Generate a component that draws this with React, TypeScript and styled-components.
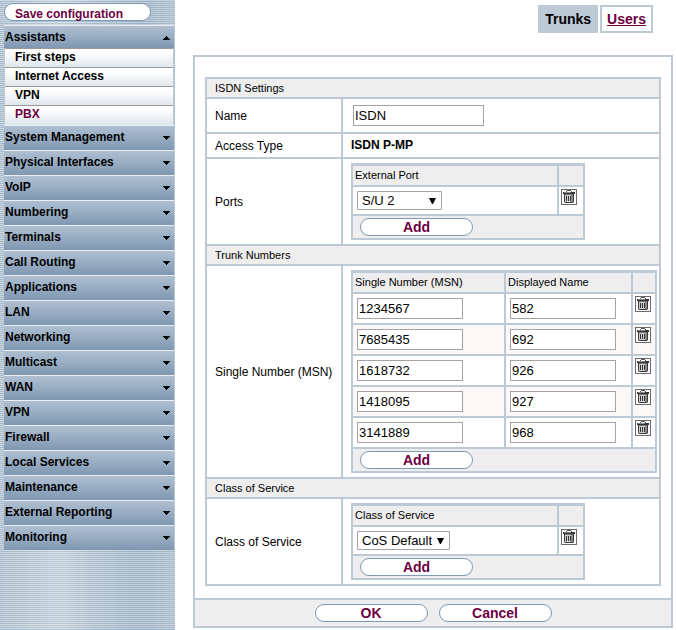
import React from "react";
import styled, { createGlobalStyle } from "styled-components";

const line = "#bec9d6";
const shade = "#eeeeee";
const accent = "#6d0042";

const GlobalStyle = createGlobalStyle`
  *, *::before, *::after { box-sizing: border-box; }
  body {
    margin: 0;
    background: #fff;
    color: #000;
    font: 13px/16px "Liberation Sans", Arial, sans-serif;
  }
  button, input, select { font-family: inherit; color: inherit; }
`;

const Page = styled.div`
  display: flex;
  min-height: 100vh;
`;

const Sidebar = styled.nav`
  flex: 0 0 175px;
  padding: 3px 1px 0 4px;
  background:
    repeating-linear-gradient(180deg, rgba(255, 255, 255, 0.3) 0 1px, rgba(110, 150, 180, 0.2) 1px 2px),
    linear-gradient(90deg, #b4c4d2 0, #cbd7df 60px, #bac8d6 90px, #aabccd 125px, #a8bacb 150px, #b3c3d1 175px);
`;

const PillButton = styled.button`
  width: 113px;
  height: 18px;
  padding: 0;
  border: 1px solid #7d99b3;
  border-radius: 9px;
  background: #fff;
  color: ${accent};
  font-size: 14px;
  font-weight: bold;
  line-height: 16px;
  cursor: pointer;
`;

const SaveButton = styled(PillButton)`
  display: block;
  width: 147px;
  margin-bottom: 4px;
  padding: 2px 0 0 10px;
  font-size: 12px;
  text-align: left;
`;

const MenuHeader = styled.button<{ $open: boolean }>`
  display: flex;
  align-items: center;
  justify-content: space-between;
  width: 100%;
  height: ${(p) => (p.$open ? 23 : 25)}px;
  padding: 0 4px ${(p) => (p.$open ? 0 : 2)}px 1px;
  border: 0;
  border-top: 1px solid #e9eef4;
  background: linear-gradient(#afbfd1, #93a8bf 60%, #7f97b1);
  font-size: 12px;
  font-weight: bold;
  text-align: left;
  cursor: pointer;
`;

const Arrow = styled.svg`
  width: 7px;
  height: 4px;
  margin-top: 2px;
`;

const SubMenu = styled.ul`
  height: 77px;
  margin: 0 1px;
  padding: 0;
  background: #dfe7ee;
  list-style: none;
`;

const SubItem = styled.li`
  height: 19px;
  border-top: 1px solid #999;
  background: linear-gradient(#fff 20%, #dfe7ee);
`;

const SubLink = styled.a<{ $active: boolean }>`
  display: block;
  padding-left: 10px;
  color: ${(p) => (p.$active ? accent : "#000")};
  font-size: 12px;
  font-weight: bold;
  line-height: 17px;
  text-decoration: none;
`;

const Content = styled.main`
  flex: 1;
  min-width: 0;
  padding: 5px 3px 2px 18px;
`;

const Tabs = styled.nav`
  display: flex;
  justify-content: flex-end;
  gap: 2px;
  margin: 0 20px 22px 0;
`;

const Tab = styled.a<{ $active: boolean }>`
  padding: 4px 5px;
  border: 2px solid ${line};
  background: ${(p) => (p.$active ? line : "#fff")};
  color: ${(p) => (p.$active ? "#000" : accent)};
  font-size: 14px;
  font-weight: bold;
  line-height: 16px;
  text-decoration: ${(p) => (p.$active ? "none" : "underline")};
`;

const Panel = styled.form`
  border: 2px solid ${line};
`;

const Settings = styled.div`
  display: grid;
  gap: 2px;
  margin: 20px 10px 12px;
  padding: 2px;
  background: ${line};
`;

const SectionTitle = styled.h2`
  margin: 0;
  padding: 0 8px;
  background: ${shade};
  font-size: 11px;
  font-weight: normal;
  line-height: 18px;
`;

const Row = styled.div`
  display: grid;
  grid-template-columns: 134px 1fr;
  gap: 2px;
`;

const Label = styled.label`
  display: flex;
  align-items: center;
  padding-left: 8px;
  background: #fff;
  font-size: 12px;
  white-space: nowrap;
`;

const Value = styled.div`
  padding: 4px 2px 4px 8px;
  background: #fff;
`;

const NameValue = styled(Value)`
  padding: 6px 2px 6px 10px;
`;

const Fixed = styled.output`
  display: block;
  font-size: 12px;
  font-weight: bold;
  line-height: 15px;
`;

const TextInput = styled.input<{ $wide?: boolean }>`
  display: block;
  width: ${(p) => (p.$wide ? 131 : 106)}px;
  height: 21px;
  padding: 1px;
  border: 1px solid #a3a3a3;
  background: #fff;
  font-size: 13px;
`;

const SelectBox = styled.span<{ $width: number }>`
  display: grid;
  align-items: center;
  width: ${(p) => p.$width}px;
  height: 19px;
  border: 1px solid #a3a3a3;
  border-radius: 1px;
  background: #fff;
`;

const Select = styled.select`
  grid-area: 1 / 1;
  width: 100%;
  height: 17px;
  padding: 0 0 0 4px;
  border: 0;
  background: transparent;
  font-size: 13px;
  appearance: none;
`;

const SelectArrow = styled.svg`
  grid-area: 1 / 1;
  justify-self: end;
  width: 7px;
  height: 6px;
  margin-right: 5px;
  pointer-events: none;
`;

const List = styled.table<{ $width: number }>`
  width: ${(p) => p.$width}px;
  max-width: 100%;
  table-layout: fixed;
  border-collapse: separate;
  border-spacing: 2px;
  border-top: 1px solid ${line};
  background: ${line};
`;

const HeadCell = styled.th<{ $width?: number }>`
  width: ${(p) => (p.$width ? `${p.$width}px` : "auto")};
  height: 19px;
  padding: 0 2px;
  background: ${shade};
  font-size: 11px;
  font-weight: normal;
  line-height: 18px;
  text-align: left;
  vertical-align: top;
`;

const Cell = styled.td<{ $tint?: boolean }>`
  padding: 4px;
  background: ${(p) => (p.$tint ? "#fcf8f7" : "#fff")};
`;

const IconCell = styled(Cell)`
  padding: 2px;
  vertical-align: top;
`;

const AddCell = styled.td`
  height: 22px;
  padding: 2px 7px;
  background: ${shade};
  & > button { display: block; }
`;

const IconButton = styled.button`
  display: block;
  width: 16px;
  height: 16px;
  padding: 0;
  border: 0;
  background: none;
  cursor: pointer;
  & > svg { display: block; }
`;

const Footer = styled.div`
  display: flex;
  justify-content: center;
  gap: 11px;
  padding: 4px;
  border-top: 2px solid ${line};
  background: ${shade};
`;

const Trash = () => (
  <svg width="16" height="16" viewBox="0 0 16 16" shapeRendering="crispEdges" aria-hidden="true">
    <path d="M0 0h16v16H0z" fill="#6a6a6a" />
    <path d="M1 1h14v14H1z" fill="#fff" />
    <path d="M6 1h4v1H6zM5 2h1v1H5zM10 2h1v1h-1z" fill="#555" />
    <path d="M2 3h12v2H2z" fill="#333" />
    <path d="M3 3h7v1H3z" fill="#8a8a8a" />
    <path d="M3 5h10v9H3z" fill="#3a3a3a" />
    <path d="M4 5h8v1H4z" fill="#777" />
    <path d="M4 6h7v7H4z" fill="#d0d0d0" />
    <path d="M10 6h2v7h-2z" fill="#8a8a8a" />
    <path d="M5 7h1v5H5zM7 7h1v5H7zM9 7h1v5H9z" fill="#333" />
    <path d="M3 13h1v1H3zM12 13h1v1h-1z" fill="#bbb" />
  </svg>
);

const DeleteButton = ({ label }: { label: string }) => (
  <IconButton type="button" aria-label={label}>
    <Trash />
  </IconButton>
);

const MenuItem = ({ title, open = false }: { title: string; open?: boolean }) => (
  <MenuHeader type="button" $open={open} aria-expanded={open}>
    {title}
    <Arrow viewBox="0 0 7 4" shapeRendering="crispEdges" aria-hidden="true">
      <path d={open ? "M3 0h1v1h1v1h1v1h1v1H0V3h1V2h1V1h1z" : "M0 0h7v1H6v1H5v1H4v1H3V3H2V2H1V1H0z"} />
    </Arrow>
  </MenuHeader>
);

const Choice = ({ id, label, value, width }: { id?: string; label: string; value: string; width: number }) => (
  <SelectBox $width={width}>
    <Select id={id} aria-label={label} defaultValue={value}>
      <option>{value}</option>
    </Select>
    <SelectArrow viewBox="0 0 7 6" aria-hidden="true">
      <path d="M0 0h7L4 6H3z" />
    </SelectArrow>
  </SelectBox>
);

const ChoiceList = ({ id, title, value, width }: { id: string; title: string; value: string; width: number }) => (
  <List $width={234}>
    <thead>
      <tr>
        <HeadCell scope="col">{title}</HeadCell>
        <HeadCell $width={24} aria-label="Delete" />
      </tr>
    </thead>
    <tbody>
      <tr>
        <Cell>
          <Choice id={id} label={title} value={value} width={width} />
        </Cell>
        <IconCell>
          <DeleteButton label={`Delete ${value}`} />
        </IconCell>
      </tr>
      <tr>
        <AddCell colSpan={2}>
          <PillButton type="button">Add</PillButton>
        </AddCell>
      </tr>
    </tbody>
  </List>
);

const subItems = ["First steps", "Internet Access", "VPN", "PBX"];

const menu = [
  "System Management", "Physical Interfaces", "VoIP", "Numbering", "Terminals", "Call Routing",
  "Applications", "LAN", "Networking", "Multicast", "WAN", "VPN", "Firewall", "Local Services",
  "Maintenance", "External Reporting", "Monitoring",
];

const numbers = [
  ["1234567", "582"],
  ["7685435", "692"],
  ["1618732", "926"],
  ["1418095", "927"],
  ["3141889", "968"],
];

export default function App() {
  return (
    <Page>
      <GlobalStyle />
      <Sidebar>
        <SaveButton type="button">Save configuration</SaveButton>
        <MenuItem title="Assistants" open />
        <SubMenu>
          {subItems.map((item) => (
            <SubItem key={item}>
              <SubLink href="#" $active={item === "PBX"}>{item}</SubLink>
            </SubItem>
          ))}
        </SubMenu>
        {menu.map((item) => (
          <MenuItem key={item} title={item} />
        ))}
      </Sidebar>
      <Content>
        <Tabs>
          <Tab href="#trunks" $active aria-current="page">Trunks</Tab>
          <Tab href="#users" $active={false}>Users</Tab>
        </Tabs>
        <Panel onSubmit={(e) => e.preventDefault()}>
          <Settings>
            <SectionTitle>ISDN Settings</SectionTitle>
            <Row>
              <Label htmlFor="name">Name</Label>
              <NameValue>
                <TextInput id="name" $wide defaultValue="ISDN" />
              </NameValue>
            </Row>
            <Row>
              <Label htmlFor="access">Access Type</Label>
              <Value>
                <Fixed id="access">ISDN P-MP</Fixed>
              </Value>
            </Row>
            <Row>
              <Label htmlFor="port">Ports</Label>
              <Value>
                <ChoiceList id="port" title="External Port" value="S/U 2" width={85} />
              </Value>
            </Row>
            <SectionTitle>Trunk Numbers</SectionTitle>
            <Row>
              <Label htmlFor="msn-0">Single Number (MSN)</Label>
              <Value>
                <List $width={306}>
                  <thead>
                    <tr>
                      <HeadCell scope="col" $width={151}>Single Number (MSN)</HeadCell>
                      <HeadCell scope="col">Displayed Name</HeadCell>
                      <HeadCell $width={22} aria-label="Delete" />
                    </tr>
                  </thead>
                  <tbody>
                    {numbers.map(([msn, name], i) => (
                      <tr key={msn}>
                        <Cell $tint={i % 2 === 1}>
                          <TextInput id={`msn-${i}`} aria-label="Single Number (MSN)" defaultValue={msn} />
                        </Cell>
                        <Cell $tint={i % 2 === 1}>
                          <TextInput aria-label="Displayed Name" defaultValue={name} />
                        </Cell>
                        <IconCell $tint={i % 2 === 1}>
                          <DeleteButton label={`Delete ${msn}`} />
                        </IconCell>
                      </tr>
                    ))}
                    <tr>
                      <AddCell colSpan={3}>
                        <PillButton type="button">Add</PillButton>
                      </AddCell>
                    </tr>
                  </tbody>
                </List>
              </Value>
            </Row>
            <SectionTitle>Class of Service</SectionTitle>
            <Row>
              <Label htmlFor="cos">Class of Service</Label>
              <Value>
                <ChoiceList id="cos" title="Class of Service" value="CoS Default" width={93} />
              </Value>
            </Row>
          </Settings>
          <Footer>
            <PillButton type="submit">OK</PillButton>
            <PillButton type="button">Cancel</PillButton>
          </Footer>
        </Panel>
      </Content>
    </Page>
  );
}
